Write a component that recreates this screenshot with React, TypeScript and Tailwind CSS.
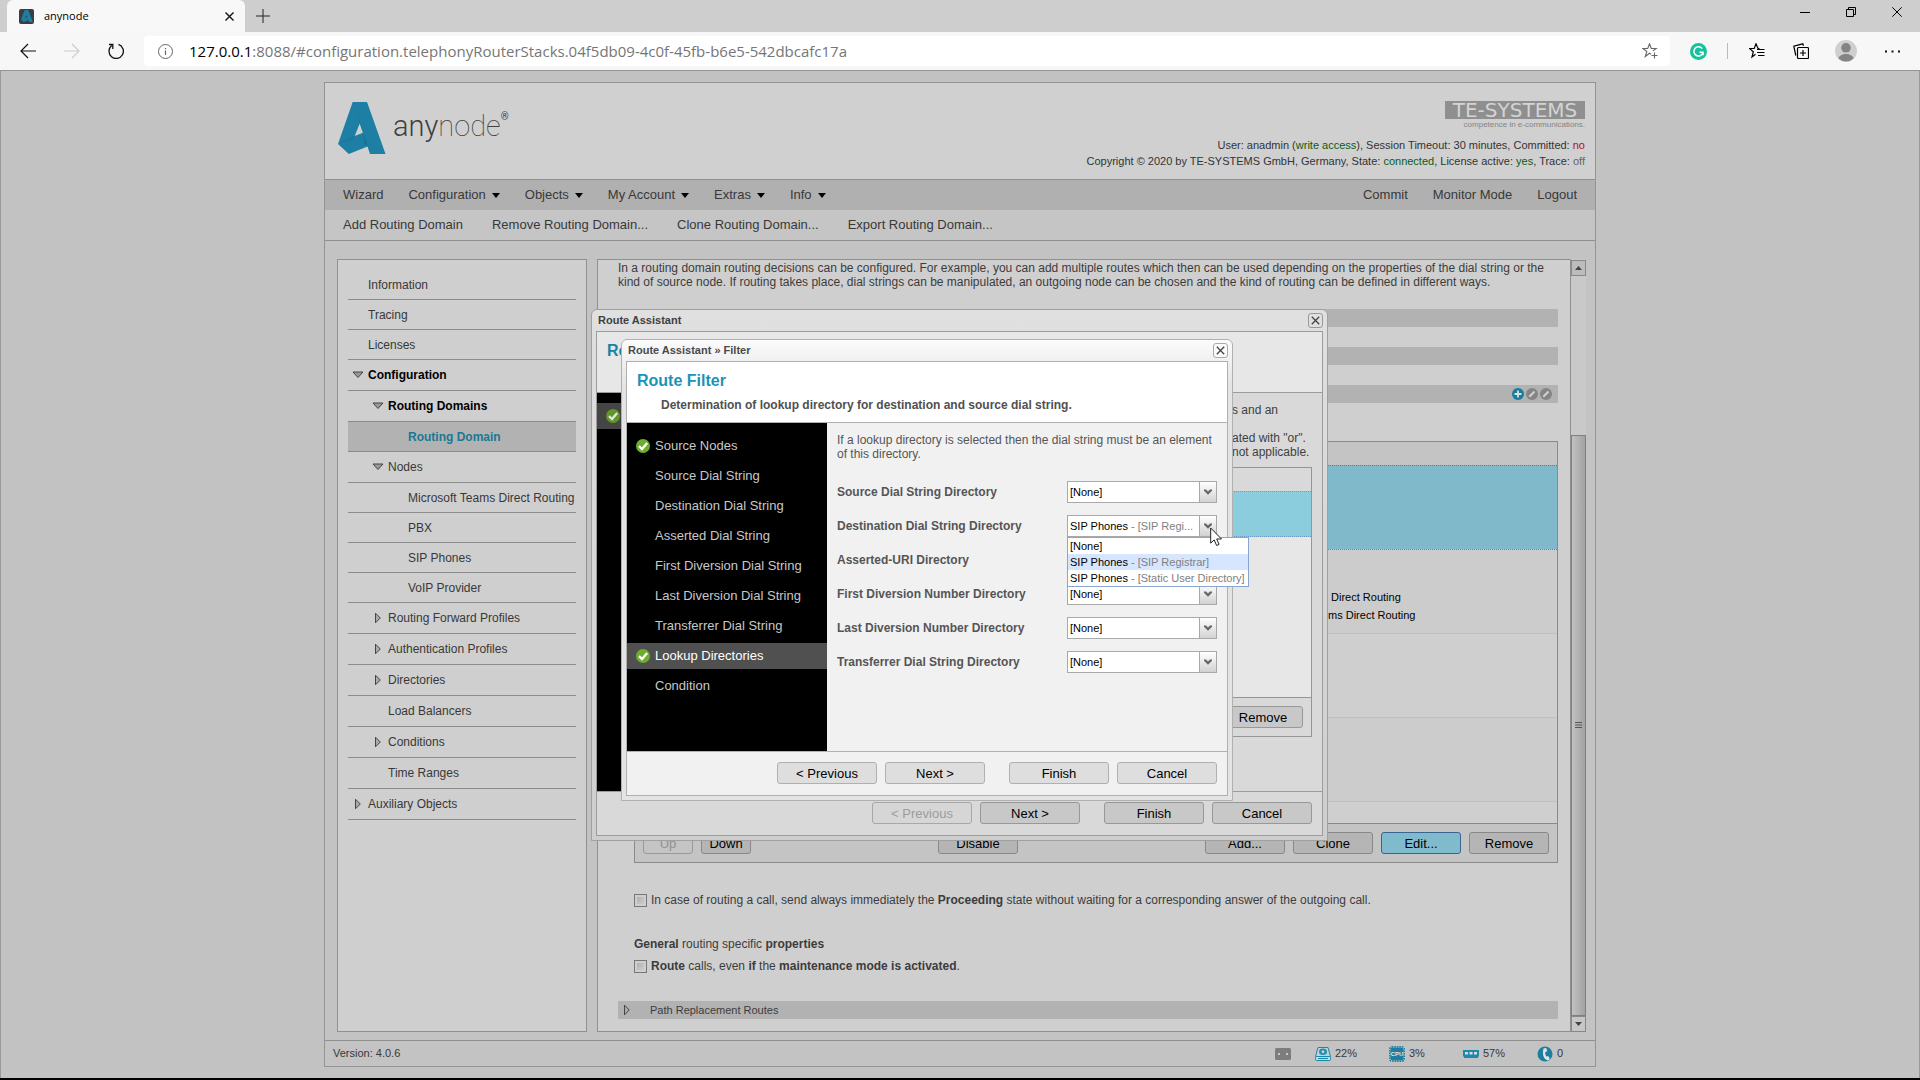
import type { ReactNode } from 'react';
import { clsx } from 'clsx';

type NavItem = {
    label: string;
    level: 0 | 1 | 2;
    arrow?: 'open' | 'closed';
    tall?: boolean;
    bold?: boolean;
    active?: boolean;
};

const navItems: NavItem[] = [
    { label: 'Information', level: 0 },
    { label: 'Tracing', level: 0 },
    { label: 'Licenses', level: 0 },
    { label: 'Configuration', level: 0, arrow: 'open', tall: true, bold: true },
    { label: 'Routing Domains', level: 1, arrow: 'open', tall: true, bold: true },
    { label: 'Routing Domain', level: 2, active: true },
    { label: 'Nodes', level: 1, arrow: 'open', tall: true },
    { label: 'Microsoft Teams Direct Routing', level: 2 },
    { label: 'PBX', level: 2 },
    { label: 'SIP Phones', level: 2 },
    { label: 'VoIP Provider', level: 2 },
    { label: 'Routing Forward Profiles', level: 1, arrow: 'closed', tall: true },
    { label: 'Authentication Profiles', level: 1, arrow: 'closed', tall: true },
    { label: 'Directories', level: 1, arrow: 'closed', tall: true },
    { label: 'Load Balancers', level: 1, tall: true },
    { label: 'Conditions', level: 1, arrow: 'closed', tall: true },
    { label: 'Time Ranges', level: 1, tall: true },
    { label: 'Auxiliary Objects', level: 0, arrow: 'closed', tall: true },
];

const menuItems = [
    { label: 'Wizard', dropdown: false },
    { label: 'Configuration', dropdown: true },
    { label: 'Objects', dropdown: true },
    { label: 'My Account', dropdown: true },
    { label: 'Extras', dropdown: true },
    { label: 'Info', dropdown: true },
];

const subMenuItems = ['Add Routing Domain', 'Remove Routing Domain...', 'Clone Routing Domain...', 'Export Routing Domain...'];

const steps = [
    { label: 'Source Nodes', done: true },
    { label: 'Source Dial String' },
    { label: 'Destination Dial String' },
    { label: 'Asserted Dial String' },
    { label: 'First Diversion Dial String' },
    { label: 'Last Diversion Dial String' },
    { label: 'Transferrer Dial String' },
    { label: 'Lookup Directories', done: true, current: true },
    { label: 'Condition' },
];

const directories = [
    { id: 'source', label: 'Source Dial String Directory' },
    { id: 'destination', label: 'Destination Dial String Directory', open: true },
    { id: 'asserted', label: 'Asserted-URI Directory' },
    { id: 'first', label: 'First Diversion Number Directory' },
    { id: 'last', label: 'Last Diversion Number Directory' },
    { id: 'transferrer', label: 'Transferrer Dial String Directory' },
];

/* ---------- icons ---------- */

function AnynodeMark({ className }: { className?: string }) {
    return (
        <svg viewBox="0 0 48 52" preserveAspectRatio="none" className={className} aria-hidden="true">
            <path
                fill="#1c7fa3"
                fillRule="evenodd"
                d="M14.7 0H29L47.500 52H32l-2.500-7.500L10.800 52 0 42zM21.800 21.500 16.700 34l8.200-3.300z"
            />
            <path fill="#176f90" d="M14.700 0 21.800 21.500 24.900 30.700 24 26z" opacity=".5" />
            <path fill="#176f90" d="M16.700 34 0 42l15-5z" opacity=".6" />
            <path fill="#155f7c" d="m24.900 30.700 4.900 13.800-2.800-3z" opacity=".6" />
        </svg>
    );
}

function TreeArrow({ open }: { open: boolean }) {
    return open ? (
        <svg width="12" height="8" viewBox="0 0 12 8" aria-hidden="true">
            <path d="M1 1h10L6 6.500z" fill="#999" stroke="#444" />
        </svg>
    ) : (
        <svg width="8" height="12" viewBox="0 0 8 12" aria-hidden="true">
            <path d="M1.500 1.200v9.600L6.300 6z" fill="#aaa" stroke="#444" />
        </svg>
    );
}

function CheckIcon({ dim }: { dim?: boolean }) {
    return (
        <svg width="14" height="14" viewBox="0 0 14 14" aria-hidden="true">
            <circle cx="7" cy="7" r="7" fill={dim ? '#5f9626' : '#6dac2d'} />
            <path d="M3 7.200 6 10l5.200-6" fill="none" stroke={dim ? '#e4e4e4' : '#fff'} strokeWidth="2.300" />
        </svg>
    );
}

function CloseGlyph() {
    return (
        <svg width="9" height="9" viewBox="0 0 9 9" aria-hidden="true">
            <path d="m.8.800 7.400 7.400M8.200.8.800 8.200" stroke="#444" strokeWidth="1.300" fill="none" />
        </svg>
    );
}

function ComboArrow() {
    return (
        <span className="flex w-[17px] shrink-0 items-center justify-center border-l border-[#a9a9a9] bg-linear-to-b from-white to-[#d2d2d2] pointer-events-none">
            <svg width="8" height="6" viewBox="0 0 8 6" aria-hidden="true">
                <path d="M0 .5h2l2 2 2-2h2v1.300L4 5.800 0 1.800z" fill="#666" />
            </svg>
        </span>
    );
}

/* ---------- browser ---------- */

function BrowserChrome() {
    return (
        <header className="bg-[#cecece] font-['Open_Sans','Noto_Sans',sans-serif]">
            <div className="flex h-8 items-stretch pl-[7px]">
                <div className="flex w-[238px] items-center rounded-t-md bg-[#f8f8f8] pl-3 pr-2">
                    <span className="flex size-[15px] items-center justify-center rounded-xs bg-[#3a3d44]">
                        <AnynodeMark className="size-3" />
                    </span>
                    <span className="ml-[10px] flex-1 text-[11px] text-black">anynode</span>
                    <button type="button" aria-label="Close tab" className="flex size-4 items-center justify-center">
                        <svg width="9" height="9" viewBox="0 0 9 9" aria-hidden="true">
                            <path d="m.5.500 8 8m0-8-8 8" stroke="#111" strokeWidth="1.400" />
                        </svg>
                    </button>
                </div>
                <button type="button" aria-label="New tab" className="ml-[10px] flex w-4 items-center justify-center">
                    <svg width="14" height="14" viewBox="0 0 14 14" aria-hidden="true">
                        <path d="M7 0v14M0 7h14" stroke="#222" />
                    </svg>
                </button>
                <div className="ml-auto flex h-6 items-center gap-9 pr-[18px]">
                    <button type="button" aria-label="Minimize">
                        <svg width="10" height="10" viewBox="0 0 10 10" aria-hidden="true">
                            <path d="M0 5.500h10" stroke="#000" />
                        </svg>
                    </button>
                    <button type="button" aria-label="Restore">
                        <svg width="10" height="10" viewBox="0 0 10 10" fill="none" stroke="#000" aria-hidden="true">
                            <path d="M.5 2.500h7v7h-7zM2.500 2.500v-2h7v7h-2" />
                        </svg>
                    </button>
                    <button type="button" aria-label="Close">
                        <svg width="10" height="10" viewBox="0 0 10 10" aria-hidden="true">
                            <path d="m.3.300 9.400 9.400m0-9.400L.3 9.700" stroke="#000" />
                        </svg>
                    </button>
                </div>
            </div>

            <div className="flex h-[39px] items-center border-b border-[#959595] bg-[#f7f7f7] pl-5 pr-5">
                <div className="flex items-center gap-7">
                    <button type="button" aria-label="Back">
                        <svg width="16" height="16" viewBox="0 0 16 16" fill="none" stroke="#111" strokeWidth="1.200" aria-hidden="true">
                            <path d="M16 8H1M8 1 1 8l7 7" />
                        </svg>
                    </button>
                    <button type="button" aria-label="Forward" disabled>
                        <svg width="16" height="16" viewBox="0 0 16 16" fill="none" stroke="#ccc" strokeWidth="1.200" aria-hidden="true">
                            <path d="M0 8h15M8 1l7 7-7 7" />
                        </svg>
                    </button>
                    <button type="button" aria-label="Refresh">
                        <svg width="16" height="16" viewBox="0 0 16 16" fill="none" stroke="#111" strokeWidth="1.300" aria-hidden="true">
                            <path d="M10.500 1.400a7.200 7.200 0 1 1-6.800 1.200M1 1.500h3.800V6" />
                        </svg>
                    </button>
                </div>
                <div className="ml-5 flex h-[30px] flex-1 items-center rounded bg-white pl-[14px] pr-3">
                    <svg width="15" height="15" viewBox="0 0 15 15" fill="none" stroke="#666" aria-hidden="true">
                        <circle cx="7.500" cy="7.500" r="7" />
                        <path d="M7.500 6.500V11M7.500 4v1.300" strokeWidth="1.200" />
                    </svg>
                    <a href="#configuration" className="ml-4 flex-1 text-[15px] text-[#767676]">
                        <span className="text-black">127.0.0.1</span>
                        :8088/#configuration.telephonyRouterStacks.04f5db09-4c0f-45fb-b6e5-542dbcafc17a
                    </a>
                    <button type="button" aria-label="Add to favorites">
                        <svg width="16" height="16" viewBox="0 0 16 16" fill="none" stroke="#666" strokeWidth="1.100" aria-hidden="true">
                            <path d="M9 11.300 7.500 10.200 3.300 13.500l1.500-5L.8 5.500h4.900L7.500.8l1.800 4.700h4.900L11 7.900M12.500 9.500v6M9.500 12.500h6" />
                        </svg>
                    </button>
                </div>
                <div className="flex items-center pl-5">
                    <svg width="17" height="17" viewBox="0 0 17 17" aria-hidden="true">
                        <circle cx="8.500" cy="8.500" r="8.500" fill="#15c39a" />
                        <path d="M12.200 5.600A4.600 4.600 0 1 0 13 9.300H9.500M13 9.300v3" fill="none" stroke="#fff" strokeWidth="1.500" />
                    </svg>
                    <span className="ml-5 h-4 w-px bg-[#bbb]" />
                    <button type="button" aria-label="Favorites" className="ml-[21px]">
                        <svg width="16" height="16" viewBox="0 0 16 16" fill="none" stroke="#000" strokeWidth="1.200" aria-hidden="true">
                            <path d="M10.500 5.500H9L7 .8 5.200 5.500H.5l3.800 3.200L3 14l3.500-2.700M8 6.500h7.500M8 9.500h7.500M9 12.500h6.500" />
                        </svg>
                    </button>
                    <button type="button" aria-label="Collections" className="ml-7">
                        <svg width="16" height="16" viewBox="0 0 16 16" fill="none" stroke="#000" strokeWidth="1.200" aria-hidden="true">
                            <rect x="4.500" y="4.500" width="11" height="11" rx="1" />
                            <path d="M10 7v6M7 10h6M2.800 12.500 .8 3.200l9-2.400.7 2" />
                        </svg>
                    </button>
                    <button type="button" aria-label="Profile" className="ml-[26px]">
                        <svg width="22" height="22" viewBox="0 0 22 22" aria-hidden="true">
                            <circle cx="11" cy="11" r="11" fill="#cfcfcf" />
                            <circle cx="11" cy="7.800" r="4.800" fill="#848484" />
                            <path d="M3.500 18.500c1-6 14-6 15 0A11 11 0 0 1 3.500 18.500z" fill="#848484" />
                        </svg>
                    </button>
                    <button type="button" aria-label="Settings and more" className="ml-7">
                        <svg width="15" height="3" viewBox="0 0 15 3" aria-hidden="true">
                            <path d="M0 .5h2v2H0zM6.500.5h2v2h-2zM13 .5h2v2h-2z" fill="#111" />
                        </svg>
                    </button>
                </div>
            </div>
        </header>
    );
}

/* ---------- application frame ---------- */

function AppHeader() {
    return (
        <div className="flex h-[97px] items-start justify-between border-b border-[#909090] bg-[#d0d0d0] pl-[13px] pr-[10px]">
            <div className="flex pt-[19px]">
                <AnynodeMark className="h-[52px] w-12" />
                <p className="ml-[7px] flex pt-[3px] font-[Roboto] text-[29px] leading-[42px] text-[#404040]">
                    <span className="font-light">any</span>
                    <span className="font-thin">node</span>
                    <span className="text-[10px] leading-6">®</span>
                </p>
            </div>
            <div className="flex flex-col items-end pt-[18px]">
                <p className="flex h-[18px] w-[140px] items-center justify-center bg-[#8f8f8f] font-['DejaVu_Sans',sans-serif] text-xl leading-[18px] text-[#d4d4d4]">
                    TE-SYSTEMS
                </p>
                <p className="text-[8px] leading-[11px] text-[#858585]">competence in e-communications.</p>
                <div className="mt-[7px] text-right text-[11px] leading-4 text-[#333]">
                    <p>
                        User: anadmin (<span className="text-[#0a5c14]">write access</span>), Session Timeout: 30 minutes, Committed:{' '}
                        <span className="text-[#b01010]">no</span>
                    </p>
                    <p>
                        Copyright © 2020 by TE-SYSTEMS GmbH, Germany, State: <span className="text-[#0a5c14]">connected</span>, License active:{' '}
                        <span className="text-[#0a5c14]">yes</span>, Trace: <span className="text-[#666]">off</span>
                    </p>
                </div>
            </div>
        </div>
    );
}

function Menus() {
    return (
        <>
            <nav className="flex h-[30px] items-center gap-[25px] bg-[#b0b0b0] px-[18px] text-[13px] text-[#383838]">
                {menuItems.map((item) => (
                    <a key={item.label} href="#menu" className="flex items-center gap-[6px]">
                        {item.label}
                        {item.dropdown && (
                            <svg width="8" height="5" viewBox="0 0 8 5" aria-hidden="true">
                                <path d="M0 0h8L4 5z" fill="#000" />
                            </svg>
                        )}
                    </a>
                ))}
                <a href="#commit" className="ml-auto">Commit</a>
                <a href="#monitor">Monitor Mode</a>
                <a href="#logout">Logout</a>
            </nav>
            <nav className="flex h-[31px] items-center gap-[29px] border-b border-[#909090] bg-[#c5c5c5] px-[18px] text-[13px] text-[#383838]">
                {subMenuItems.map((label) => (
                    <a key={label} href="#action">{label}</a>
                ))}
            </nav>
        </>
    );
}

function SideNav() {
    return (
        <aside className="w-[250px] shrink-0 border border-[#909090] bg-[#cfcfcf] px-[10px] pt-[10px] text-xs text-[#383838]">
            <ul>
                {navItems.map((item) => (
                    <li
                        key={item.label}
                        className={clsx(
                            'border-b border-[#8c8c8c]',
                            item.tall ? 'h-[31px]' : 'h-[30px]',
                            item.active && 'bg-[#b2b2b2]',
                            item.level === 1 && 'pl-5',
                            item.level === 2 && 'pl-10',
                        )}
                    >
                        <a
                            href="#nav"
                            className={clsx(
                                'flex h-full items-center whitespace-nowrap',
                                item.bold && 'font-bold text-black',
                                item.active && 'font-bold text-[#1c7893]',
                            )}
                        >
                            <span className="flex w-5 shrink-0 items-center justify-center">
                                {item.arrow && <TreeArrow open={item.arrow === 'open'} />}
                            </span>
                            {item.label}
                        </a>
                    </li>
                ))}
            </ul>
        </aside>
    );
}

function PlainButton({ children, className, disabled }: { children: ReactNode; className?: string; disabled?: boolean }) {
    return (
        <button
            type="button"
            disabled={disabled}
            className={clsx('h-[22px] rounded-[3px] border pt-px text-center text-[13px] leading-5', className)}
        >
            {children}
        </button>
    );
}

const pageButton = 'border-[#888] bg-[#b5b5b5] text-black';

function RoutesTable() {
    return (
        <div className="mt-[38px] ml-4 border border-[#8a8a8a] bg-[#cccccc]">
            <table className="w-full border-collapse text-[11px] text-black">
                <thead>
                    <tr className="h-[23px] bg-[#c4c4c4]">
                        <th aria-label="Routes" />
                    </tr>
                </thead>
                <tbody>
                    <tr className="h-[84px] border-y border-dotted border-[#5b82ae] bg-[#80b9ca]">
                        <td />
                    </tr>
                    <tr className="h-[84px] border-b border-[#c0c0c0]">
                        <td className="pt-[30px] pl-[693px] leading-[18px] whitespace-pre">
                            {' Direct Routing\nms Direct Routing'}
                        </td>
                    </tr>
                    <tr className="h-[84px] border-b border-[#c0c0c0] bg-[#cfcfcf]">
                        <td />
                    </tr>
                    <tr className="h-[84px] border-b border-[#c0c0c0]">
                        <td />
                    </tr>
                    <tr className="h-[22px] bg-[#cfcfcf]">
                        <td />
                    </tr>
                </tbody>
            </table>
            <div className="flex items-center gap-2 border-t border-[#8a8a8a] bg-[#c4c4c4] p-2">
                <PlainButton disabled className="w-[50px] border-[#999] bg-[#c4c4c4] text-[#929292]">Up</PlainButton>
                <PlainButton className={clsx('w-[50px]', pageButton)}>Down</PlainButton>
                <div className="flex flex-1 justify-center">
                    <PlainButton className={clsx('w-20', pageButton)}>Disable</PlainButton>
                </div>
                <PlainButton className={clsx('w-20', pageButton)}>Add...</PlainButton>
                <PlainButton className={clsx('w-20', pageButton)}>Clone</PlainButton>
                <PlainButton className="w-20 border-[#3a6591] bg-[#80bacd] text-black">Edit...</PlainButton>
                <PlainButton className={clsx('w-20', pageButton)}>Remove</PlainButton>
            </div>
        </div>
    );
}

function CheckOption({ children, className }: { children: ReactNode; className?: string }) {
    return (
        <label className={clsx('ml-4 flex items-center gap-1 leading-[14px]', className)}>
            <input
                type="checkbox"
                className="size-[13px] shrink-0 appearance-none border border-[#777] bg-linear-to-br from-[#aaa] to-[#d4d4d4] outline-2 -outline-offset-3 outline-[#cfcfcf]"
            />
            <span>{children}</span>
        </label>
    );
}

function MainPanel() {
    return (
        <main className="flex min-w-0 flex-1">
            <div className="min-w-0 flex-1 border border-[#909090] bg-[#cfcfcf] pt-px pb-3 pl-5 pr-3 text-xs text-[#3c3c3c]">
                <p className="leading-[14px]">
                    In a routing domain routing decisions can be configured. For example, you can add multiple routes which then can be used
                    depending on the properties of the dial string or the kind of source node. If routing takes place, dial strings can be
                    manipulated, an outgoing node can be chosen and the kind of routing can be defined in different ways.
                </p>
                <div className="mt-5 h-[18px] bg-[#b2b2b2]" />
                <div className="mt-5 h-[18px] bg-[#b2b2b2]" />
                <div className="mt-5 flex h-[18px] items-center justify-end gap-0.5 bg-[#b2b2b2] pr-[6px]">
                    <button type="button" aria-label="Add">
                        <svg width="12" height="12" viewBox="0 0 12 12" aria-hidden="true">
                            <circle cx="6" cy="6" r="6" fill="#157d9d" />
                            <path d="M6 2.500v7M2.500 6h7" stroke="#e0e0e0" strokeWidth="1.800" />
                        </svg>
                    </button>
                    {['Edit', 'Change'].map((name) => (
                        <button key={name} type="button" aria-label={name}>
                            <svg width="12" height="12" viewBox="0 0 12 12" aria-hidden="true">
                                <circle cx="6" cy="6" r="6" fill="#858585" />
                                <path d="M3.300 8.700 8.500 3.500" stroke="#d0d0d0" strokeWidth="2" />
                            </svg>
                        </button>
                    ))}
                </div>
                <RoutesTable />
                <CheckOption className="mt-[30px]">
                    In case of routing a call, send always immediately the <b>Proceeding</b> state without waiting for a corresponding answer of the
                    outgoing call.
                </CheckOption>
                <p className="mt-[30px] ml-4 leading-[14px]">
                    <b>General</b> routing specific <b>properties</b>
                </p>
                <CheckOption className="mt-2">
                    <b>Route</b> calls, even <b>if</b> the <b>maintenance mode is activated</b>.
                </CheckOption>
                <div className="mt-7 flex h-[18px] items-center bg-[#b2b2b2] pl-[5px] text-[11px]">
                    <TreeArrow open={false} />
                    <span className="ml-[19px]">Path Replacement Routes</span>
                </div>
            </div>
            <div className="flex w-[15px] flex-col bg-[#c9c9c9]">
                <button type="button" aria-label="Scroll up" className="mt-px flex h-4 items-center justify-center border border-[#888] bg-[#bcbcbc]">
                    <svg width="7" height="4" viewBox="0 0 7 4" aria-hidden="true">
                        <path d="M0 4h7L3.500 0z" fill="#444" />
                    </svg>
                </button>
                <div className="h-[159px]" />
                <div className="flex flex-1 items-center justify-center border border-[#808080] bg-linear-to-r from-[#c2c2c2] to-[#a2a2a2]">
                    <svg width="7" height="8" viewBox="0 0 7 8" aria-hidden="true">
                        <path d="M0 .5h7M0 3h7M0 5.500h7" stroke="#555" />
                    </svg>
                </div>
                <button type="button" aria-label="Scroll down" className="flex h-4 items-center justify-center border border-[#888] bg-[#c6c6c6]">
                    <svg width="7" height="4" viewBox="0 0 7 4" aria-hidden="true">
                        <path d="M0 0h7L3.500 4z" fill="#444" />
                    </svg>
                </button>
            </div>
        </main>
    );
}

function StatusBar() {
    return (
        <footer className="flex h-[26px] items-center border-t border-[#909090] pl-2 pr-2 text-[11px] text-[#383838]">
            <span>Version: 4.0.6</span>
            <div className="ml-auto flex items-center gap-6">
                <svg width="16" height="12" viewBox="0 0 16 12" aria-hidden="true">
                    <rect width="16" height="12" rx="1.500" fill="#7d7d7d" />
                    <rect x="3" y="5" width="2" height="2" fill="#c8c8c8" />
                    <rect x="11" y="5" width="2" height="2" fill="#c8c8c8" />
                </svg>
                <span className="flex w-[50px] items-center gap-1">
                    <svg width="16" height="14" viewBox="0 0 16 14" aria-hidden="true">
                        <path d="M3 .5h10l2.500 9H.5z" fill="#bfd3d8" stroke="#1c86a6" />
                        <rect x=".5" y="9.500" width="15" height="4" rx="1" fill="#c5dce3" stroke="#1c86a6" />
                        <ellipse cx="8" cy="4.800" rx="4" ry="3.300" fill="#2c90af" />
                        <circle cx="8" cy="4.800" r="1.200" fill="#e0e0e0" />
                        <path d="M3 11.500h10" stroke="#1c86a6" />
                    </svg>
                    22%
                </span>
                <span className="flex w-[50px] items-center gap-1">
                    <svg width="16" height="16" viewBox="0 0 16 16" aria-hidden="true">
                        <rect x=".8" y=".8" width="14.400" height="14.400" rx="2" fill="none" stroke="#1c7f9f" strokeWidth="1.500" strokeDasharray="1.500 1" />
                        <rect x="1.500" y="1.500" width="13" height="13" rx="2" fill="#1c7f9f" />
                        <text x="8" y="10.200" textAnchor="middle" fontSize="6" fontWeight="bold" fill="#e4e4e4">CPU</text>
                    </svg>
                    3%
                </span>
                <span className="flex w-[50px] items-center gap-1">
                    <svg width="16" height="8" viewBox="0 0 16 8" aria-hidden="true">
                        <path d="M0 0h16v6.500h-1V8H1V6.500H0z" fill="#2288a8" />
                        <path d="M2 2h3v2.500H2zM6.500 2h3v2.500h-3zM11 2h3v2.500h-3z" fill="#cfe0e4" />
                    </svg>
                    57%
                </span>
                <span className="flex w-[50px] items-center gap-1">
                    <svg width="16" height="16" viewBox="0 0 16 16" aria-hidden="true">
                        <circle cx="8" cy="8" r="7.500" fill="#1c7f9f" />
                        <path d="M6.500 2.500 9.300 2l.8 3.300-2 1q0 2.500 1.300 4.300l2.200-.3 1.200 2.900-2.300 1.300Q6.300 12.500 6 8q-.2-3 .5-5.500z" fill="#e4e4e4" />
                    </svg>
                    0
                </span>
            </div>
        </footer>
    );
}

/* ---------- dialogs ---------- */

function TitleBar({ title, dim }: { title: string; dim?: boolean }) {
    return (
        <div className="flex h-[21px] items-center justify-between pl-[2px]">
            <h2 className={clsx('text-[11px] font-bold', dim ? 'text-[#404040]' : 'text-[#4a4a4a]')}>{title}</h2>
            <button
                type="button"
                aria-label={`Close ${title}`}
                className={clsx(
                    'flex size-[15px] items-center justify-center rounded-[3px] border',
                    dim ? 'border-[#999] bg-[#e0e0e0]' : 'border-[#aaa] bg-[#fafafa]',
                )}
            >
                <CloseGlyph />
            </button>
        </div>
    );
}

const dimButton = 'w-[100px] border-[#989898] bg-[#c8c8c8] text-black';
const dialogButton = 'w-[100px] border-[#b0b0b0] bg-[#dedede] text-black';

function RouteAssistantDialog() {
    return (
        <section
            aria-label="Route Assistant"
            className="absolute top-[226px] left-[266px] w-[737px] rounded-t-md border border-[#a0a0a0] bg-[#d2d2d2] bg-linear-to-b from-[#e0e0e0] to-[#cecece] px-1 pb-1"
        >
            <TitleBar title="Route Assistant" dim />
            <div className="flex h-[505px] flex-col border border-[#9c9c9c] bg-[#d9d9d9]">
                <div className="h-[61px] shrink-0 border-b border-[#9c9c9c] bg-[#e7e7e7] px-[10px] pt-[9px]">
                    <h3 className="text-base leading-5 font-bold text-[#1a83a2]">Ro</h3>
                </div>
                <div className="flex flex-1">
                    <div className="w-[200px] shrink-0 bg-black pt-[10px]">
                        <div className="flex h-[26px] items-center bg-[#454545] pl-[9px]">
                            <CheckIcon dim />
                        </div>
                    </div>
                    <div className="flex flex-1 flex-col pr-[10px] pb-[54px] text-xs leading-[14px] text-[#3f3f3f]">
                        <div className="mt-[10px] ml-[435px] whitespace-nowrap">
                            <p>s and an</p>
                            <p className="mt-[14px]">ated with "or".</p>
                            <p>not applicable.</p>
                        </div>
                        <div className="mt-2 ml-[10px] flex flex-1 flex-col border border-[#969696] bg-[#e7e7e7]">
                            <div className="h-[23px] bg-[#d9d9d9]" />
                            <div className="h-[46px] border-y border-dotted border-[#6e9cc6] bg-[#8bcddd]" />
                            <div className="mt-auto flex justify-end border-t border-[#969696] bg-[#d9d9d9] p-2">
                                <PlainButton className="w-20 border-[#989898] bg-[#c8c8c8] text-black">Remove</PlainButton>
                            </div>
                        </div>
                    </div>
                </div>
                <div className="flex h-11 shrink-0 items-start justify-end gap-2 border-t border-[#9c9c9c] pt-[10px] pr-[10px]">
                    <PlainButton disabled className="w-[100px] border-[#a8a8a8] bg-[#d6d6d6] text-[#9c9c9c]">&lt; Previous</PlainButton>
                    <PlainButton className={dimButton}>Next &gt;</PlainButton>
                    <PlainButton className={clsx('ml-4', dimButton)}>Finish</PlainButton>
                    <PlainButton className={dimButton}>Cancel</PlainButton>
                </div>
            </div>
        </section>
    );
}

function DirectoryRow({ id, label, open }: { id: string; label: string; open?: boolean }) {
    return (
        <div className="flex h-[22px] items-center justify-between">
            <label htmlFor={id} className="text-xs font-bold text-[#555]">{label}</label>
            <div className="relative flex h-[22px] w-[150px] border border-[#a9a9a9] bg-white text-[11px] text-black">
                {open ? (
                    <>
                        <button
                            id={id}
                            type="button"
                            aria-haspopup="listbox"
                            aria-expanded="true"
                            className="min-w-0 flex-1 px-0.5 text-left whitespace-nowrap"
                        >
                            SIP Phones <span className="text-[#808080]">- [SIP Regi...</span>
                        </button>
                        <ComboArrow />
                        <ul role="listbox" className="absolute top-[21px] -left-px z-10 w-[182px] border border-[#8aa5cf] bg-white leading-4 whitespace-nowrap">
                            <li role="option" className="px-0.5">[None]</li>
                            <li role="option" aria-selected="true" className="bg-[#d6e6ff] px-0.5">
                                SIP Phones <span className="text-[#808080]">- [SIP Registrar]</span>
                            </li>
                            <li role="option" className="px-0.5">
                                SIP Phones <span className="text-[#808080]">- [Static User Directory]</span>
                            </li>
                        </ul>
                    </>
                ) : (
                    <>
                        <select id={id} className="min-w-0 flex-1 appearance-none px-0.5">
                            <option>[None]</option>
                        </select>
                        <ComboArrow />
                    </>
                )}
            </div>
        </div>
    );
}

function RouteFilterDialog() {
    return (
        <section
            aria-label="Route Filter"
            className="absolute top-[256px] left-[296px] w-[612px] rounded-t-md border border-[#b0b0b0] bg-linear-to-b from-[#fbfbfb] to-[#e4e4e4] to-10% px-1 pb-1"
        >
            <TitleBar title="Route Assistant » Filter" />
            <div className="border border-[#b0b0b0] bg-[#f1f1f1]">
                <div className="h-[61px] border-b border-[#b0b0b0] bg-white px-[10px] pt-[9px]">
                    <h3 className="text-base leading-5 font-bold text-[#1b93b7]">Route Filter</h3>
                    <p className="mt-[7px] pl-6 text-xs leading-[14px] font-bold text-[#505050]">
                        Determination of lookup directory for destination and source dial string.
                    </p>
                </div>
                <div className="flex h-[328px]">
                    <ol className="flex w-[200px] shrink-0 flex-col gap-1 bg-black pt-[10px] text-[13px] text-[#c8c8c8]">
                        {steps.map((step) => (
                            <li
                                key={step.label}
                                className={clsx('flex h-[26px] items-center pl-[9px]', step.current && 'bg-[#505050] text-white')}
                            >
                                <span className="w-[19px]">{step.done && <CheckIcon />}</span>
                                <a href="#step">{step.label}</a>
                            </li>
                        ))}
                    </ol>
                    <div className="flex-1 px-[10px] pt-[10px]">
                        <p className="text-xs leading-[14px] text-[#555]">
                            If a lookup directory is selected then the dial string must be an element of this directory.
                        </p>
                        <div className="mt-5 flex flex-col gap-3">
                            {directories.map((directory) => (
                                <DirectoryRow key={directory.id} {...directory} />
                            ))}
                        </div>
                    </div>
                </div>
                <div className="flex h-11 items-start justify-end gap-2 border-t border-[#b0b0b0] pt-[10px] pr-[10px]">
                    <PlainButton className={dialogButton}>&lt; Previous</PlainButton>
                    <PlainButton className={dialogButton}>Next &gt;</PlainButton>
                    <PlainButton className={clsx('ml-4', dialogButton)}>Finish</PlainButton>
                    <PlainButton className={dialogButton}>Cancel</PlainButton>
                </div>
            </div>
            <svg className="absolute top-[187px] left-[588px] z-20" width="13" height="20" viewBox="0 0 13 20" aria-hidden="true">
                <path d="M.7 1v15.200l3.500-3.300 2.400 5.600 2.500-1.100-2.400-5.400h4.800z" fill="#fff" stroke="#222" />
            </svg>
        </section>
    );
}

export default function App() {
    return (
        <div className="flex min-h-screen flex-col border-b-2 border-black bg-[#c2c2c2] font-['Liberation_Sans',Arial,sans-serif]">
            <BrowserChrome />
            <div className="flex flex-1 flex-col border-x border-[#999] py-[11px]">
                <div className="relative mx-auto flex w-full max-w-[1272px] flex-1 flex-col border border-[#949494] bg-[#c3c3c3]">
                    <AppHeader />
                    <Menus />
                    <div className="flex flex-1 gap-[10px] pt-[18px] pr-[9px] pb-2 pl-3">
                        <SideNav />
                        <MainPanel />
                    </div>
                    <StatusBar />
                    <RouteAssistantDialog />
                    <RouteFilterDialog />
                </div>
            </div>
        </div>
    );
}
